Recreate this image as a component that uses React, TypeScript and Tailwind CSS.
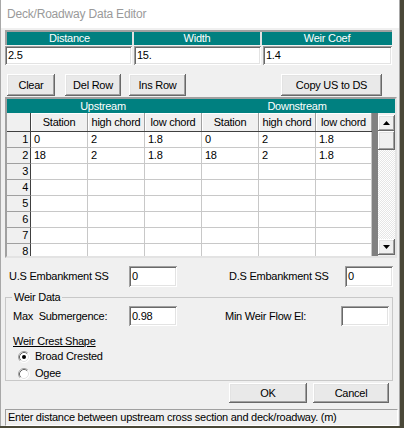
const raised =
  "shadow-[inset_-1px_-1px_#696969,inset_1px_1px_#ffffff,inset_-2px_-2px_#a0a0a0,inset_2px_2px_#e3e3e3]";
const sunken =
  "shadow-[inset_1px_1px_#a0a0a0,inset_-1px_-1px_#ffffff,inset_2px_2px_#696969,inset_-2px_-2px_#e3e3e3]";

const rows = [
  ["0", "2", "1.8", "0", "2", "1.8"],
  ["18", "2", "1.8", "18", "2", "1.8"],
];
const colWidths = ["w-[57px]", "w-[57px]", "w-[57px]", "w-[57px]", "w-[57px]", "w-[56px]"];
const headers = ["Station", "high chord", "low chord", "Station", "high chord", "low chord"];

function Button({ label, className }: { label: string; className: string }) {
  return (
    <button
      type="button"
      className={`${className} ${raised} flex items-center justify-center bg-[#e9e9e9] text-black`}
    >
      {label}
    </button>
  );
}

function TextBox({ value, className }: { value: string; className: string }) {
  return (
    <div className={`${className} ${sunken} flex items-center bg-white pl-[3px] text-black`}>
      {value}
    </div>
  );
}

function Radio({ checked }: { checked: boolean }) {
  return (
    <svg width="12" height="12" viewBox="0 0 12 12">
      <circle cx="6" cy="6" r="5.5" fill="#ffffff" />
      <path d="M2.11 9.89 A5.5 5.5 0 0 1 9.89 2.11" fill="none" stroke="#a0a0a0" strokeWidth="1" />
      <path d="M2.82 9.18 A4.5 4.5 0 0 1 9.18 2.82" fill="none" stroke="#696969" strokeWidth="1" />
      <path d="M9.89 2.11 A5.5 5.5 0 0 1 2.11 9.89" fill="none" stroke="#ffffff" strokeWidth="1" />
      <path d="M9.18 2.82 A4.5 4.5 0 0 1 2.82 9.18" fill="none" stroke="#e3e3e3" strokeWidth="1" />
      {checked && <circle cx="6" cy="6" r="2" fill="#000000" />}
    </svg>
  );
}

function Arrow({ up }: { up: boolean }) {
  return (
    <svg width="7" height="4" viewBox="0 0 7 4">
      <path d={up ? "M0 4 L3.5 0 L7 4 Z" : "M0 0 L3.5 4 L7 0 Z"} fill="#000000" />
    </svg>
  );
}

function Grid() {
  const lines = Array.from({ length: 8 }, (_, i) => rows[i] ?? ["", "", "", "", "", ""]);
  return (
    <div className="mt-[1px] flex h-[161px] w-[392px] flex-col border-2 border-t-[#a0a0a0] border-l-[#a0a0a0] border-r-[#e3e3e3] border-b-[#e3e3e3]">
      <div className="flex h-[14px] bg-[#008080] leading-[14px] text-white">
        <div className="w-[192px] text-center">Upstream</div>
        <div className="flex-1 text-center">Downstream</div>
      </div>
      <div className="flex h-[143px] overflow-hidden">
        <div className="flex w-[365px] flex-col bg-white">
          <div className="flex h-[19px] shrink-0 border-b border-[#404040] bg-[#f0f0f0]">
            <div className="w-[24px] border-r border-[#404040]" />
            {headers.map((h, i) => (
              <div
                key={i}
                className={`${colWidths[i]} flex items-center justify-center border-r border-[#a0a0a0] shadow-[inset_1px_1px_#ffffff]`}
              >
                {h}
              </div>
            ))}
          </div>
          {lines.map((r, ri) => (
            <div key={ri} className="flex h-[16px] shrink-0">
              <div className="flex w-[24px] items-center justify-end border-r border-b border-r-[#404040] border-b-[#a0a0a0] bg-[#f0f0f0] pr-[2px]">
                {ri + 1}
              </div>
              {r.map((c, ci) => (
                <div
                  key={ci}
                  className={`${colWidths[ci]} flex items-center border-r border-b border-[#c8c8c8] pl-[3px]`}
                >
                  {c}
                </div>
              ))}
            </div>
          ))}
        </div>
        <div className="w-[6px] bg-[#808080]" />
        <div className="flex w-[17px] flex-col bg-[#f0f0f0] pt-[2px]">
          <div className={`flex h-[16px] items-center justify-center bg-[#f0f0f0] ${raised}`}>
            <Arrow up />
          </div>
          <div className={`h-[19px] bg-[#f0f0f0] ${raised}`} />
          <div className="flex-1 bg-[repeating-conic-gradient(#e6e6e6_0%_25%,#ffffff_0%_50%)] bg-size-[2px_2px]" />
          <div className={`flex h-[16px] items-center justify-center bg-[#f0f0f0] ${raised}`}>
            <Arrow up={false} />
          </div>
          <div className="h-[1px]" />
        </div>
      </div>
    </div>
  );
}

export default function App() {
  return (
    <div className="relative h-[428px] w-[404px] overflow-hidden bg-[#4a4838] font-['Liberation_Sans',Arial,sans-serif] text-[11px] tracking-[-0.25px] text-black">
      <div className="flex h-[426px] w-[400px] flex-col border-r border-l border-[#a8a8a8] bg-[#f0f0f0]">
        <div className="flex h-[28px] shrink-0 items-center bg-white pl-[6px] text-[12px] tracking-[-0.2px] text-[#9a9a9a]">
          Deck/Roadway Data Editor
        </div>
        <div className="flex flex-col pl-[4px]">
          {/* top data table */}
          <div className="mt-[2px] flex w-[387px] flex-col">
            <div className="flex h-[15px] border-t-2 border-l-2 border-[#a0a0a0] leading-[13px] text-white">
              <div className="w-[127px] border-r-2 border-[#e3e3e3] bg-[#008080] text-center">Distance</div>
              <div className="w-[128px] border-r-2 border-[#e3e3e3] bg-[#008080] text-center">Width</div>
              <div className="flex-1 bg-[#008080] text-center">Weir Coef</div>
            </div>
            <div className="mt-[1px] flex h-[19px] gap-[2px]">
              <TextBox value="2.5" className="w-[127px]" />
              <TextBox value="15." className="w-[127px]" />
              <TextBox value="1.4" className="flex-1" />
            </div>
          </div>

          {/* buttons */}
          <div className="mt-[9px] flex h-[22px]">
            <Button label="Clear" className="ml-[2px] w-[48px]" />
            <Button label="Del Row" className="ml-[10px] w-[56px]" />
            <Button label="Ins Row" className="ml-[8px] w-[57px]" />
            <Button label="Copy US to DS" className="ml-[95px] w-[101px]" />
          </div>

          <Grid />

          {/* embankment */}
          <div className="mt-[8px] flex h-[21px] items-center">
            <div className="w-[124px] pl-[4px]">U.S Embankment SS</div>
            <TextBox value="0" className="h-[21px] w-[48px]" />
            <div className="w-[52px]" />
            <div className="w-[116px]">D.S Embankment SS</div>
            <TextBox value="0" className="h-[21px] w-[48px]" />
          </div>

          {/* weir data group */}
          <div className="relative mt-[10px] h-[84px] w-[388px] border border-[#c8c8c8]">
            <div className="absolute -top-[7px] left-[6px] bg-[#f0f0f0] px-[2px] leading-[13px]">Weir Data</div>
            <div className="mt-[8px] flex h-[20px] items-center">
              <div className="w-[123px] pl-[7px]">Max&nbsp; Submergence:</div>
              <TextBox value="0.98" className="h-[20px] w-[48px]" />
              <div className="w-[48px]" />
              <div className="w-[116px]">Min Weir Flow El:</div>
              <TextBox value="" className="h-[20px] w-[48px]" />
            </div>
            <div className="mt-[8px] h-[14px] pl-[7px] leading-[14px] underline">Weir Crest Shape</div>
            <div className="flex h-[17px] items-center gap-[5px] pl-[12px]">
              <Radio checked />
              <span>Broad Crested</span>
            </div>
            <div className="flex h-[17px] items-center gap-[5px] pl-[12px]">
              <Radio checked={false} />
              <span>Ogee</span>
            </div>
          </div>

          {/* ok / cancel */}
          <div className="mt-[2px] flex h-[20px]">
            <Button label="OK" className="ml-[224px] w-[78px]" />
            <Button label="Cancel" className="ml-[6px] w-[76px]" />
          </div>

          {/* status */}
          <div className="mt-[6px] flex h-[17px] w-[393px] items-center border border-t-[#a0a0a0] border-l-[#a0a0a0] border-r-white border-b-white pl-[2px]">
            Enter distance between upstream cross section and deck/roadway. (m)
          </div>
        </div>
      </div>
    </div>
  );
}
